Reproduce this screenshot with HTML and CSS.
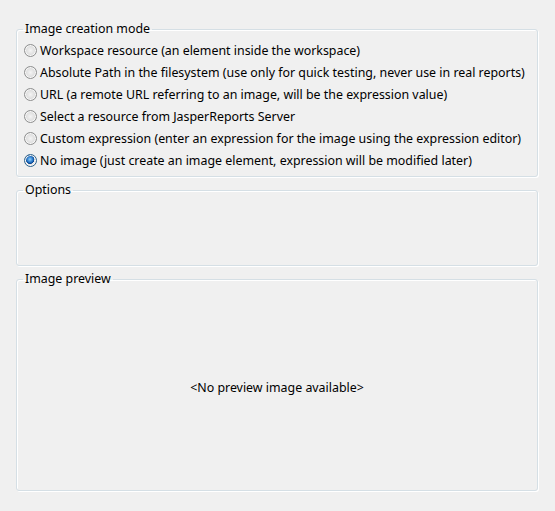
FILE: index.html
```html
<!DOCTYPE html>
<html>
<head>
<meta charset="utf-8">
<link rel="stylesheet" href="styles.css">
</head>
<body>
<div class="page">
  <fieldset class="group group-mode">
    <legend>Image creation mode</legend>
    <div class="options">
      <label class="radio"><span class="dot"></span><span>Workspace resource (an element inside the workspace)</span></label>
      <label class="radio"><span class="dot"></span><span>Absolute Path in the filesystem (use only for quick testing, never use in real reports)</span></label>
      <label class="radio"><span class="dot"></span><span>URL (a remote URL referring to an image, will be the expression value)</span></label>
      <label class="radio"><span class="dot"></span><span>Select a resource from JasperReports Server</span></label>
      <label class="radio"><span class="dot"></span><span>Custom expression (enter an expression for the image using the expression editor)</span></label>
      <label class="radio"><span class="dot checked"></span><span>No image (just create an image element, expression will be modified later)</span></label>
    </div>
  </fieldset>
  <fieldset class="group group-options">
    <legend>Options</legend>
  </fieldset>
  <fieldset class="group group-preview">
    <legend>Image preview</legend>
    <div class="preview">&lt;No preview image available&gt;</div>
  </fieldset>
</div>
</body>
</html>
```

FILE: styles.css
```css
html, body {
  margin: 0;
  padding: 0;
  background: #f0f0f0;
}
body {
  font-family: "Noto Sans", "Liberation Sans", sans-serif;
  font-size: 12.4px;
  color: #000;
  width: 555px;
  height: 511px;
  overflow: hidden;
}
.page {
  padding: 21px 17px 0 16px;
  display: flex;
  flex-direction: column;
}
.group {
  box-sizing: border-box;
  margin: 0;
  padding: 0;
  min-width: 0;
  border: 1px solid #d5dfe5;
  border-radius: 3px;
  box-shadow: inset 1px 1px 0 #fff, 1px 1px 0 #fff;
}
.group legend {
  margin-left: 6px;
  padding: 0 2px;
  line-height: 16px;
  height: 16px;
}
.group-mode {
  height: 156px;
}
.group-options {
  margin-top: 5px;
  height: 84px;
}
.group-preview {
  margin-top: 5px;
  height: 220px;
}
.options {
  padding: 2px 0 0 7px;
  display: flex;
  flex-direction: column;
}
.radio {
  display: flex;
  align-items: center;
  height: 22px;
  gap: 3px;
  white-space: nowrap;
}
.dot {
  width: 11px;
  height: 11px;
  border-radius: 50%;
  border: 1px solid #8e8f8f;
  background: radial-gradient(circle at 50% 50%, #f4f4f4 0, #dcdcdc 60%, #c8c8c8 100%);
  box-shadow: inset 0 0 0 1px #f8f8f8;
  flex: none;
}
.dot.checked {
  border-color: #2c628b;
  background: radial-gradient(circle at 45% 40%, #8fd0ff 0, #1f6fc2 35%, #0c3f86 48%, #e8e8e8 52%, #d6d6d6 100%);
}
.preview {
  height: 200px;
  display: flex;
  align-items: center;
  justify-content: center;
}
```
